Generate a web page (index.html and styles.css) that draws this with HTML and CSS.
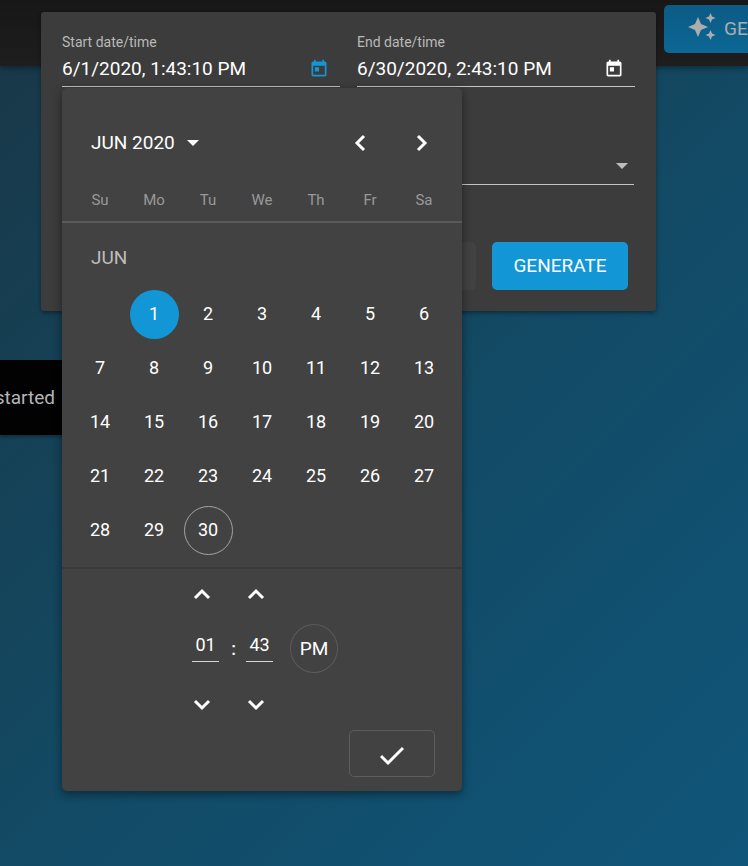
FILE: index.html
```html
<!DOCTYPE html>
<html lang="en">
<head>
<meta charset="utf-8">
<meta name="viewport" content="width=device-width, initial-scale=1">
<title>Generate</title>
<link rel="stylesheet" href="styles.css">
</head>
<body>
<header class="topbar">
  <button class="topbar-action" type="button">
    <svg class="sparkle" viewBox="0 0 28 28" aria-hidden="true"><path d="M10 4l3 7 7 3-7 3-3 7-3-7-7-3 7-3zM22.500 0l1.500 3.500 3.500 1.500-3.500 1.500-1.500 3.500-1.500-3.500-3.500-1.500 3.500-1.500zM22.500 17l1.500 3.500 3.500 1.500-3.500 1.500-1.500 3.500-1.500-3.500-3.500-1.500 3.500-1.500z"/></svg>
    <span>GE</span>
  </button>
</header>
<main class="page">
  <p class="notice">started</p>
</main>

<div class="overlay">
  <form class="dialog" role="dialog" aria-label="Generate">
    <div class="fields">
      <div class="field">
        <label for="start">Start date/time</label>
        <div class="field-row">
          <input id="start" type="text" value="6/1/2020, 1:43:10 PM">
          <button class="toggle active" type="button" aria-label="Open start calendar">
            <svg viewBox="0 0 24 24" aria-hidden="true"><path d="M19 3h-1V1h-2v2H8V1H6v2H5c-1.110 0-2 .9-2 2v14c0 1.100.9 2 2 2h14c1.100 0 2-.9 2-2V5c0-1.100-.9-2-2-2zm0 16H5V8h14v11zM7 10h5v5H7z"/></svg>
          </button>
        </div>

        <section class="picker" aria-label="Calendar">
          <div class="picker-head">
            <button class="period" type="button">JUN 2020 <span class="caret"></span></button>
            <button class="nav" type="button" aria-label="Previous month"><svg viewBox="0 0 24 24"><path d="M17 5l-7 7 7 7"/></svg></button>
            <button class="nav" type="button" aria-label="Next month"><svg viewBox="0 0 24 24"><path d="M9 5l7 7-7 7"/></svg></button>
          </div>
          <table class="calendar">
            <thead>
              <tr><th>Su</th><th>Mo</th><th>Tu</th><th>We</th><th>Th</th><th>Fr</th><th>Sa</th></tr>
            </thead>
            <tbody>
              <tr><td class="month" colspan="7">JUN</td></tr>
              <tr><td></td><td><button class="day selected" type="button">1</button></td><td><button class="day" type="button">2</button></td><td><button class="day" type="button">3</button></td><td><button class="day" type="button">4</button></td><td><button class="day" type="button">5</button></td><td><button class="day" type="button">6</button></td></tr>
              <tr><td><button class="day" type="button">7</button></td><td><button class="day" type="button">8</button></td><td><button class="day" type="button">9</button></td><td><button class="day" type="button">10</button></td><td><button class="day" type="button">11</button></td><td><button class="day" type="button">12</button></td><td><button class="day" type="button">13</button></td></tr>
              <tr><td><button class="day" type="button">14</button></td><td><button class="day" type="button">15</button></td><td><button class="day" type="button">16</button></td><td><button class="day" type="button">17</button></td><td><button class="day" type="button">18</button></td><td><button class="day" type="button">19</button></td><td><button class="day" type="button">20</button></td></tr>
              <tr><td><button class="day" type="button">21</button></td><td><button class="day" type="button">22</button></td><td><button class="day" type="button">23</button></td><td><button class="day" type="button">24</button></td><td><button class="day" type="button">25</button></td><td><button class="day" type="button">26</button></td><td><button class="day" type="button">27</button></td></tr>
              <tr><td><button class="day" type="button">28</button></td><td><button class="day" type="button">29</button></td><td><button class="day today" type="button">30</button></td><td></td><td></td><td></td><td></td></tr>
            </tbody>
          </table>
          <div class="time">
            <div class="spinner">
              <button class="step" type="button" aria-label="Hour up"><svg viewBox="0 0 24 24"><path d="M5 16l7-7 7 7"/></svg></button>
              <div class="unit"><input type="text" value="01" aria-label="Hour"></div>
              <button class="step" type="button" aria-label="Hour down"><svg viewBox="0 0 24 24"><path d="M5 8l7 7 7-7"/></svg></button>
            </div>
            <div class="spinner">
              <button class="step" type="button" aria-label="Minute up"><svg viewBox="0 0 24 24"><path d="M5 16l7-7 7 7"/></svg></button>
              <div class="unit"><span class="colon">:</span><input type="text" value="43" aria-label="Minute"></div>
              <button class="step" type="button" aria-label="Minute down"><svg viewBox="0 0 24 24"><path d="M5 8l7 7 7-7"/></svg></button>
            </div>
            <button class="meridian" type="button">PM</button>
          </div>
          <div class="confirm-row">
            <button class="confirm" type="button" aria-label="Confirm"><svg viewBox="0 0 24 24"><path d="M1 14l7 7L23 6"/></svg></button>
          </div>
        </section>
      </div>
      <div class="field">
        <label for="end">End date/time</label>
        <div class="field-row">
          <input id="end" type="text" value="6/30/2020, 2:43:10 PM">
          <button class="toggle" type="button" aria-label="Open end calendar">
            <svg viewBox="0 0 24 24" aria-hidden="true"><path d="M19 3h-1V1h-2v2H8V1H6v2H5c-1.110 0-2 .9-2 2v14c0 1.100.9 2 2 2h14c1.100 0 2-.9 2-2V5c0-1.100-.9-2-2-2zm0 16H5V8h14v11zM7 10h5v5H7z"/></svg>
          </button>
        </div>
      </div>
    </div>
    <div class="select-row">
      <select aria-label="Option"></select>
      <span class="caret"></span>
    </div>
    <div class="actions">
      <button class="secondary" type="button" aria-label="Cancel"></button>
      <button class="primary" type="button">GENERATE</button>
    </div>
  </form>
</div>
</body>
</html>
```
FILE: styles.css
```css
* { box-sizing: border-box; }

body {
  margin: 0;
  min-height: 100vh;
  overflow: hidden;
  font: 400 18px/24px Roboto, sans-serif;
  color: #fff;
  background: linear-gradient(135deg, #193747 0%, #14465d 42%, #124b67 58%, #10567a 100%);
}

button, input, select {
  margin: 0;
  padding: 0;
  border: 0;
  background: none;
  color: inherit;
  font: inherit;
}

svg { display: block; }

.topbar {
  display: flex;
  justify-content: flex-end;
  height: 66px;
  padding-top: 5px;
  background: linear-gradient(#171717, #1e1e1e);
  box-shadow: 0 2px 6px rgba(0, 0, 0, .4);
}

.topbar-action {
  display: flex;
  gap: 8px;
  align-items: center;
  width: 84px;
  height: 48px;
  padding-left: 24px;
  border-radius: 5px 0 0 5px;
  background: linear-gradient(#0b5b85, #0c6794);
  color: #adadad;
  font-size: 19px;
}

.sparkle {
  flex: none;
  width: 28px;
  height: 28px;
  margin-bottom: 4px;
  fill: #adadad;
}

.page { padding-top: 294px; }

.notice {
  display: flex;
  justify-content: flex-end;
  align-items: center;
  width: 70px;
  height: 75px;
  margin: 0;
  padding-right: 15px;
  overflow: hidden;
  background: #020202;
  color: #b5b5b5;
  font-size: 19px;
  box-shadow: 0 2px 3px rgba(0, 0, 0, .3);
}

.overlay {
  position: absolute;
  inset: 0;
  padding: 12px 92px 0 41px;
}

.dialog {
  padding: 20px 21px 21px;
  border-radius: 3px;
  background: #3c3c3c;
  box-shadow: 0 2px 4px rgba(0, 0, 0, .4);
}

.fields {
  display: grid;
  grid-template-columns: 1fr 1fr;
  gap: 17px;
}

.field {
  position: relative;
}

.field label {
  display: block;
  color: #b9b9b9;
  font-size: 14px;
  line-height: 20px;
}

.field-row {
  display: flex;
  align-items: center;
  height: 35px;
  border-bottom: 1px solid #c4c4c4;
}

.field-row input {
  flex: 1;
  min-width: 0;
  font-size: 19px;
}

.toggle {
  margin-right: 11px;
}

.toggle svg {
  width: 20px;
  height: 20px;
  fill: #fff;
}

.toggle.active svg { fill: #1296d5; }

.caret {
  width: 0;
  border: 6px solid transparent;
  border-top-color: currentColor;
  border-bottom: 0;
}

.select-row {
  display: flex;
  align-items: center;
  height: 38px;
  margin: 60px 1px 0 0;
  padding-right: 6px;
  border-bottom: 1px solid #c4c4c4;
  color: #bdbdbd;
}

.select-row select {
  flex: 1;
  appearance: none;
}

.actions {
  display: flex;
  justify-content: flex-end;
  gap: 16px;
  padding: 57px 7px 0 0;
}

.actions button {
  width: 136px;
  height: 48px;
  border-radius: 5px;
}

.actions .secondary { background: #424242; }

.actions .primary {
  background: #1296d5;
  font-size: 19px;
}

.picker {
  position: absolute;
  z-index: 1;
  top: 56px;
  left: 0;
  width: 400px;
  padding-bottom: 14px;
  border-radius: 5px;
  background: #424242;
  box-shadow: 0 3px 10px rgba(0, 0, 0, .45);
}

.picker-head {
  display: flex;
  align-items: center;
  height: 100px;
  padding: 10px 16px 0 29px;
}

.period {
  display: flex;
  gap: 12px;
  align-items: center;
  margin-right: auto;
  font-size: 19px;
}

.nav {
  width: 50px;
  height: 48px;
  margin-left: 12px;
}

.nav svg, .step svg {
  width: 24px;
  height: 24px;
  margin: 0 auto;
  fill: none;
  stroke: #fff;
  stroke-width: 3;
}

.calendar {
  width: 100%;
  border-collapse: collapse;
  table-layout: fixed;
}

.calendar thead, .calendar tbody {
  display: block;
  padding: 0 11px;
}

.calendar thead { border-bottom: 2px solid #5a5a5a; }

.calendar tbody {
  padding-bottom: 10px;
  border-bottom: 2px solid #393939;
}

.calendar th {
  width: 54px;
  height: 33px;
  padding: 0 0 9px;
  color: #999;
  font-size: 15px;
  font-weight: 400;
}

.calendar td {
  width: 54px;
  height: 54px;
  padding: 0;
  text-align: center;
}

.calendar .month {
  height: 64px;
  padding: 6px 18px 0;
  color: #bdbdbd;
  font-size: 19px;
  text-align: left;
}

.day {
  width: 49px;
  height: 49px;
  border-radius: 50%;
}

.day.selected { background: #1296d5; }

.day.today { border: 1px solid #a5a5a5; }

.time {
  display: flex;
  align-items: center;
  padding-left: 113px;
}

.spinner { width: 54px; }

.step {
  display: block;
  width: 100%;
  height: 50px;
}

.unit {
  display: flex;
  justify-content: flex-end;
  align-items: center;
  gap: 10px;
  height: 61px;
  padding: 0 10px 9px 0;
}

.unit input {
  width: 27px;
  height: 34px;
  border-bottom: 1px solid #d5d5d5;
  text-align: center;
}

.colon {
  padding-top: 8px;
  font-weight: 500;
}

.meridian {
  width: 48px;
  height: 49px;
  margin: 0 0 2px 7px;
  border: 1px solid #5a5a5a;
  border-radius: 50%;
  font-size: 19px;
}

.confirm-row {
  display: flex;
  justify-content: flex-end;
  padding-right: 27px;
}

.confirm {
  width: 86px;
  height: 47px;
  border: 1px solid #5c5c5c;
  border-radius: 5px;
}

.confirm svg {
  width: 24px;
  height: 24px;
  margin: 0 auto;
  fill: none;
  stroke: #fff;
  stroke-width: 3;
}
```
